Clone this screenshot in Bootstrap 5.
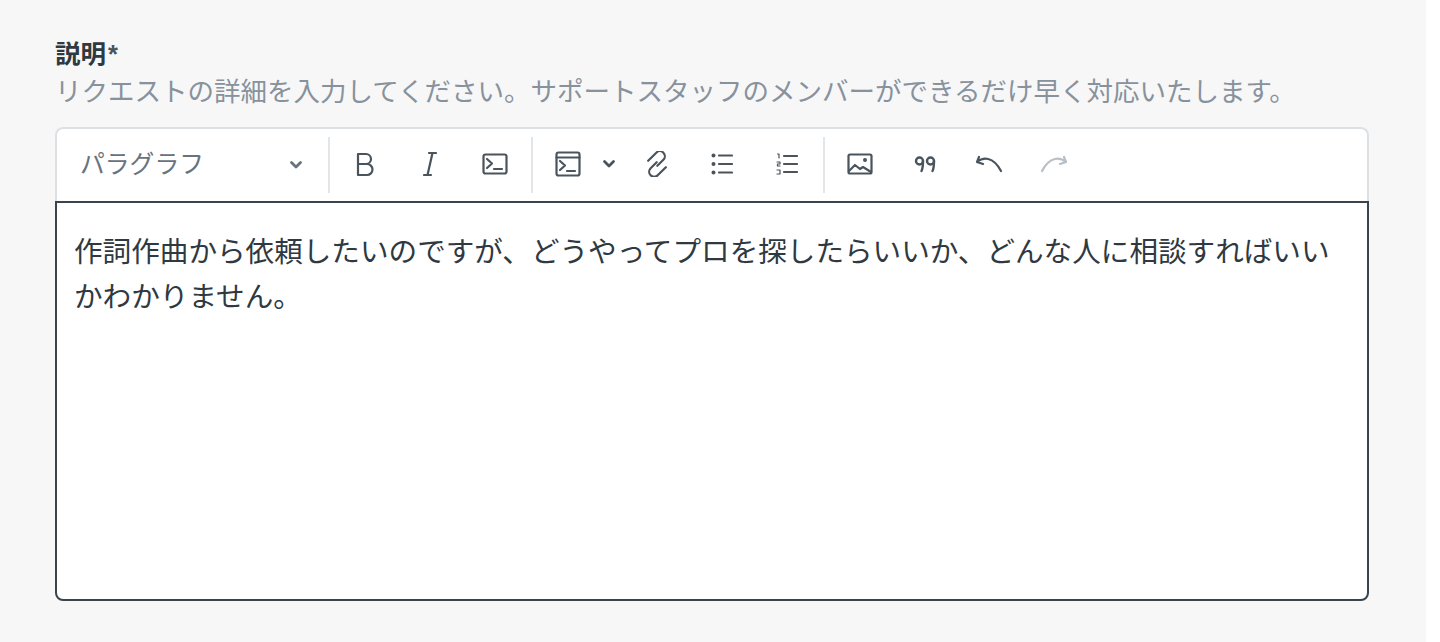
<!doctype html>
<html lang="ja">

<head>
  <meta charset="utf-8">
  <meta name="viewport" content="width=device-width, initial-scale=1">
  <title>説明</title>
  <link href="https://cdn.jsdelivr.net/npm/bootstrap@5.3.0/dist/css/bootstrap.min.css" rel="stylesheet">
  <style>
    html, body {
      height: 642px;
      overflow: hidden;
      background: #fff;
    }

    body {
      font-family: "Liberation Sans", "Noto Sans CJK JP", sans-serif;
    }

    .form-panel {
      width: 1426px;
      height: 642px;
      background: #f7f7f7;
      padding: 39px 57px 0 55px;
    }

    .field-label {
      font-size: 25.5px;
      line-height: 30px;
      font-weight: 700;
      color: #2f3941;
      margin: 0;
    }

    .field-label span {
      margin-left: 2px;
      color: #49545c;
    }

    .field-hint {
      font-size: 26.5px;
      line-height: 46px;
      color: #87929d;
      margin: 0 0 12px;
      white-space: nowrap;
    }

    .editor-box {
      background: #fff;
      border-radius: 8px;
    }

    .editor-bar {
      height: 74px;
      border: 2px solid #dde0e3;
      border-bottom: 0;
      border-radius: 8px 8px 0 0;
      padding: 8px 0 0 0;
    }

    .bar-select {
      width: 271px;
      height: 56px;
      padding: 0 25px 0 23px;
      color: #68737d;
      font-size: 24.8px;
    }

    .bar-sep {
      width: 2px;
      height: 56px;
      background: #e3e6e8;
    }

    .bar-group {
      height: 56px;
      padding: 0 4px 0 2px;
    }

    .bar-btn {
      width: 65px;
      height: 56px;
      padding-bottom: 2px;
      color: #49545c;
    }

    .bar-btn-wide {
      width: 89px;
      padding: 0 8px 2px 20px;
    }

    .bar-btn.is-off {
      color: #b8bfc5;
    }

    .editor-text {
      height: 400px;
      border: 2px solid #39444c;
      border-radius: 0 0 8px 8px;
      padding: 27px 17px 0;
      font-size: 28.6px;
      line-height: 45px;
      color: #2f3941;
    }

    .editor-text p {
      margin: 0;
    }

    svg {
      display: block;
      fill: none;
      stroke: currentColor;
      stroke-width: 2.2;
      stroke-linecap: round;
      stroke-linejoin: round;
    }
  </style>
</head>

<body>
  <div class="form-panel">
    <p class="field-label">説明<span>*</span></p>
    <p class="field-hint">リクエストの詳細を入力してください。サポートスタッフのメンバーができるだけ早く対応いたします。</p>

    <div class="editor-box">
      <!-- Toolbar -->
      <div class="editor-bar d-flex align-items-start">
        <div class="bar-select d-flex align-items-center justify-content-between">
          <span>パラグラフ</span>
          <svg width="14" height="10" viewBox="0 0 14 10"><path d="M2.500 2.500 7 7l4.500-4.500" stroke-width="2.800"/></svg>
        </div>
        <div class="bar-sep"></div>

        <div class="bar-group d-flex">
          <div class="bar-btn d-flex align-items-center justify-content-center">
            <svg width="20" height="26" viewBox="0 0 20 26"><path d="M3 3h8a5 5 0 0 1 0 10H3zM3 13h9a5.500 5.500 0 0 1 0 11H3z"/></svg>
          </div>
          <div class="bar-btn d-flex align-items-center justify-content-center">
            <svg width="14" height="26" viewBox="0 0 14 26"><path d="M6 2h7M1 24h7M9.500 2 4.500 24"/></svg>
          </div>
          <div class="bar-btn d-flex align-items-center justify-content-center">
            <svg width="26" height="22" viewBox="0 0 26 22"><rect x="1.500" y="1.500" width="23" height="19" rx="2"/><path d="m5 6 5 4.500L5 15M12 16h8"/></svg>
          </div>
        </div>
        <div class="bar-sep"></div>

        <div class="bar-group d-flex">
          <div class="bar-btn bar-btn-wide d-flex align-items-center justify-content-between">
            <svg width="26" height="26" viewBox="0 0 26 26"><rect x="1.500" y="1.500" width="23" height="23" rx="2"/><path d="M1.500 6.500h23M5 10l5 4.500L5 19M12 20h8"/></svg>
            <svg width="14" height="10" viewBox="0 0 14 10"><path d="M2.500 2.500 7 7l4.500-4.500" stroke-width="2.800"/></svg>
          </div>
          <div class="bar-btn d-flex align-items-center justify-content-center">
            <svg width="26" height="26" viewBox="0 0 26 26"><g transform="rotate(-45 13 13)"><path d="M9 4.500h11.500a5 5 0 0 1 0 10H12"/><path d="M17 21.500H5.500a5 5 0 0 1 0-10H14"/></g></svg>
          </div>
          <div class="bar-btn d-flex align-items-center justify-content-center">
            <svg width="22" height="22" viewBox="0 0 22 22"><path d="M8 2.500h13M8 11h13M8 19.500h13"/><circle cx="2.500" cy="2.500" r="2" fill="currentColor" stroke="none"/><circle cx="2.500" cy="11" r="2" fill="currentColor" stroke="none"/><circle cx="2.500" cy="19.500" r="2" fill="currentColor" stroke="none"/></svg>
          </div>
          <div class="bar-btn d-flex align-items-center justify-content-center">
            <svg width="22" height="24" viewBox="0 0 22 24"><path d="M8 4h13M8 12h13M8 20h13"/><path d="M1.500 2h1.500v4M1 10h3v2H1.500v2H4M1 18h3v4H1" stroke-width="1.200"/></svg>
          </div>
        </div>
        <div class="bar-sep"></div>

        <div class="bar-group d-flex">
          <div class="bar-btn d-flex align-items-center justify-content-center">
            <svg width="26" height="22" viewBox="0 0 26 22"><rect x="1.500" y="1.500" width="23" height="19" rx="1.500"/><path d="m2 18 6-6 5 4 3-2 8 5"/><circle cx="18" cy="7" r="2" fill="currentColor" stroke="none"/></svg>
          </div>
          <div class="bar-btn d-flex align-items-center justify-content-center">
            <svg width="22" height="18" viewBox="0 0 22 18"><circle cx="5.500" cy="6" r="3.500" stroke-width="2.400"/><circle cx="16.500" cy="6" r="3.500" stroke-width="2.400"/><path d="M9 6c0 4 0 7-1.500 10M20 6c0 4 0 7-1.500 10" stroke-width="2.400"/></svg>
          </div>
          <div class="bar-btn d-flex align-items-center justify-content-center">
            <svg width="28" height="18" viewBox="1 0 28 18"><path d="M2 7c6-5 16-6 24 9M2 7l2-5M2 7l6 2"/></svg>
          </div>
          <div class="bar-btn is-off d-flex align-items-center justify-content-center">
            <svg width="28" height="18" viewBox="1 0 28 18"><path d="M26 7C20 2 10 1 2 16M26 7l-2-5M26 7l-6 2"/></svg>
          </div>
        </div>
      </div>

      <!-- Text area -->
      <div class="editor-text">
        <p>作詞作曲から依頼したいのですが、どうやってプロを探したらいいか、どんな人に相談すればいいかわかりません。</p>
      </div>
    </div>
  </div>

  <script src="https://cdn.jsdelivr.net/npm/bootstrap@5.3.0/dist/js/bootstrap.bundle.min.js"></script>
</body>

</html>
